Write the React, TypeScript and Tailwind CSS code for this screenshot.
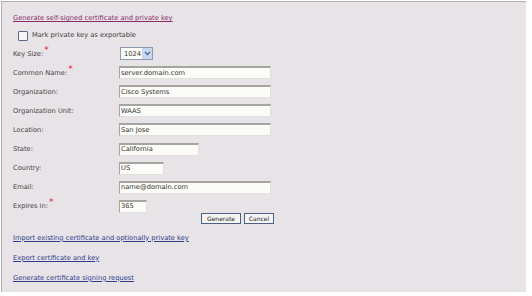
import React from "react";

const font = { fontFamily: '"DejaVu Sans", Verdana, sans-serif' };

function Req() {
  return <span className="text-[#e0202a] text-[9px] leading-none relative top-[-3px] ml-[1px]">*</span>;
}

function Row({ label, req, children }: { label: string; req?: boolean; children: React.ReactNode }) {
  return (
    <div className="flex items-center h-[19.1px]">
      <div className="w-[106px] text-[#444] whitespace-nowrap">
        {label}
        {req && <Req />}
      </div>
      {children}
    </div>
  );
}

function Input({ w, value }: { w: string; value: string }) {
  return (
    <div
      className={`${w} h-[13px] bg-[#fbfbf8] border-t-2 border-l border-[#a4a4a0] border-r border-b border-r-[#e0e0dc] border-b-[#e0e0dc] flex items-center pl-[1px] text-[#333] leading-none`}
    >
      {value}
    </div>
  );
}

export default function App() {
  return (
    <div className="w-[532px] h-[296px] bg-white text-[6.7px]" style={font}>
      <div className="ml-[1px] mt-[1px] w-[525px] h-[291px] border-l border-t border-[#b0b0b0] bg-[#e7e3e7] pl-[11px] pt-[10px] flex flex-col">
        <div className="h-[12px] flex items-center">
          <span className="text-[#8a2b68] underline">Generate self-signed certificate and private key</span>
        </div>
        <div className="h-[17px] mt-[3px] flex items-center pl-[5px]">
          <div className="w-[10px] h-[10px] border border-[#5a6a88] bg-[#f6f6f6] rounded-[1px]" />
          <span className="ml-[4px] text-[#444]">Mark private key as exportable</span>
        </div>
        <Row label="Key Size:" req>
          <div className="ml-[1px] w-[33px] h-[13px] bg-[#fbfbf8] border border-[#8c9ab4] flex items-center">
            <span className="pl-[3px] flex-1 text-[#333]">1024</span>
            <div className="w-[10px] h-[11px] bg-[#c9d7ee] flex items-center justify-center">
              <svg width="7" height="5" viewBox="0 0 7 5">
                <path d="M1 1 L3.5 3.5 L6 1" stroke="#4a66a0" strokeWidth="1.4" fill="none" />
              </svg>
            </div>
          </div>
        </Row>
        <Row label="Common Name:" req>
          <Input w="w-[152px]" value="server.domain.com" />
        </Row>
        <Row label="Organization:">
          <Input w="w-[152px]" value="Cisco Systems" />
        </Row>
        <Row label="Organization Unit:">
          <Input w="w-[152px]" value="WAAS" />
        </Row>
        <Row label="Location:">
          <Input w="w-[152px]" value="San Jose" />
        </Row>
        <Row label="State:">
          <Input w="w-[80px]" value="California" />
        </Row>
        <Row label="Country:">
          <Input w="w-[45px]" value="US" />
        </Row>
        <Row label="Email:">
          <Input w="w-[152px]" value="name@domain.com" />
        </Row>
        <Row label="Expires in:" req>
          <Input w="w-[28px]" value="365" />
        </Row>
        <div className="flex justify-start pl-[188px] gap-[3px] h-[11px] -mt-[3px]">
          <div className="w-[40px] h-[11px] border border-[#4f5f7f] bg-[#f4f4f4] text-[6px] flex items-center justify-center text-[#222]">
            Generate
          </div>
          <div className="w-[30px] h-[11px] border border-[#4f5f7f] bg-[#f4f4f4] text-[6px] flex items-center justify-center text-[#222]">
            Cancel
          </div>
        </div>
        <div className="h-[20px] mt-[4px] flex items-center">
          <span className="text-[#2e3c8e] underline">Import existing certificate and optionally private key</span>
        </div>
        <div className="h-[20px] flex items-center">
          <span className="text-[#2e3c8e] underline">Export certificate and key</span>
        </div>
        <div className="h-[20px] flex items-center">
          <span className="text-[#2e3c8e] underline">Generate certificate signing request</span>
        </div>
      </div>
    </div>
  );
}
